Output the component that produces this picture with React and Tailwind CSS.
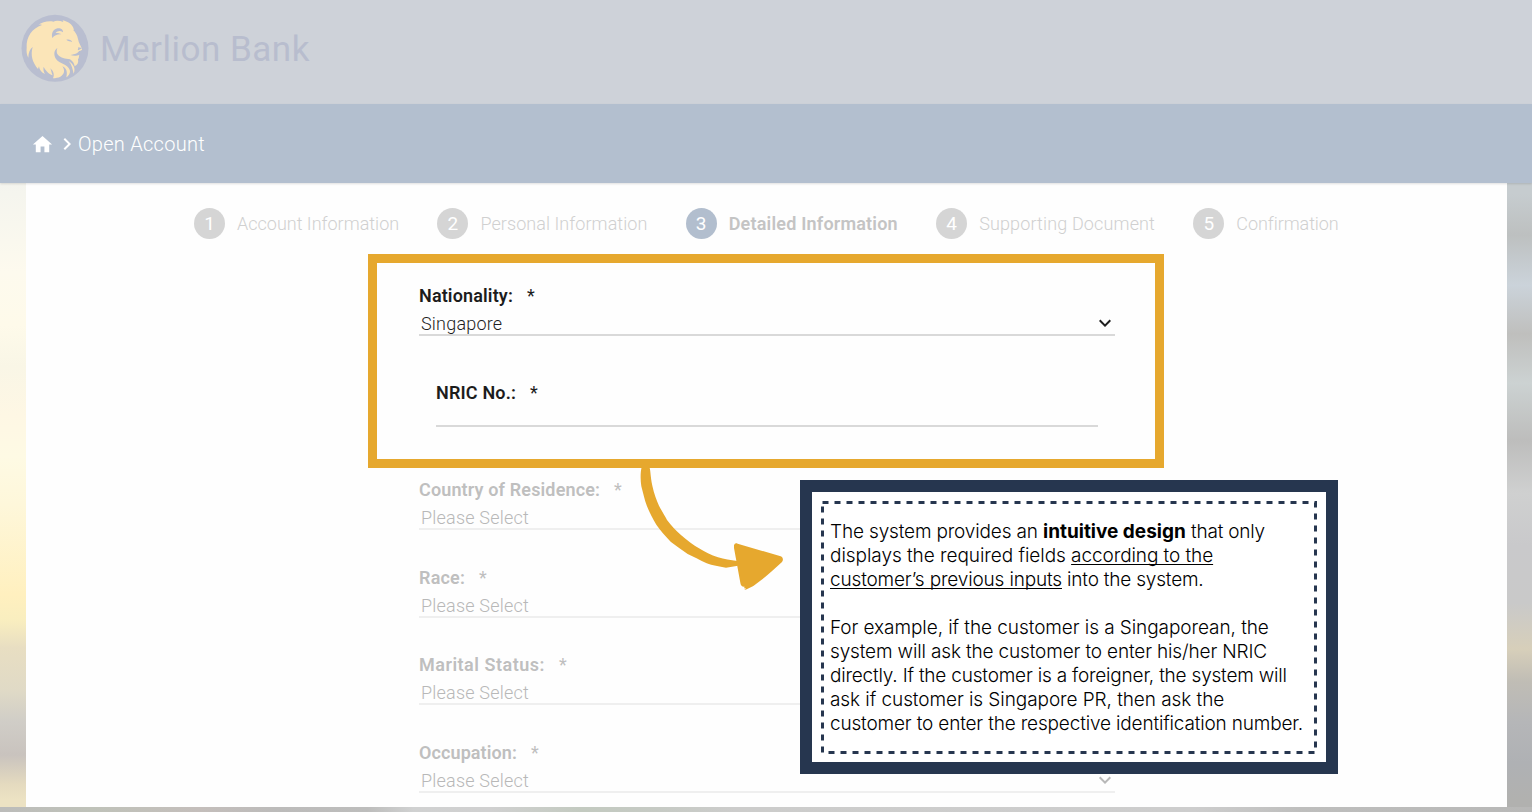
import React from 'react';
import { MdHome, MdChevronRight, MdKeyboardArrowDown } from 'react-icons/md';

function LionLogo() {
  return (
    <svg className="h-[85px] w-[90px] shrink-0" viewBox="0 0 270 255">
      <circle cx="135" cy="130" r="100.5" fill="#b9bed0" />
      <path
        fill="#fbe5b8"
        d="M50 128 C48 96 66 70 96 60 C91 58 88 58 84 60 C96 52 114 47 130 50 C139 45 150 47 160 51 L158 46 C173 50 188 57 192 75 L189 74 C197 82 202 90 204 102 C206 113 212 122 216 131 C217 135 213 137 207 138 C205 144 195 148 181 150 C190 153 201 153 208 149 C206 155 208 158 204 163 C206 173 203 180 194 184 C193 175 188 168 180 163 C166 162 151 158 145 151 C139 145 139 137 142 129 C131 136 131 151 138 162 C149 177 172 176 179 194 C182 204 177 211 169 217 C173 201 170 190 157 184 C166 197 163 208 151 215 C145 218 137 219 129 220 C134 210 131 199 121 190 C125 200 125 207 128 211 C116 207 105 195 101 185 C99 193 101 201 105 207 C93 203 88 192 87 184 L84 192 C67 171 61 151 68 126 C60 132 55 144 55 158 C50 149 49 139 50 128 Z"
      />
      <path
        fill="#b9bed0"
        d="M127 99 C123 86 129 73 143 70 C153 69 160 74 159 82 C151 76 143 77 137 84 C144 83 150 85 154 88 C143 87 134 90 127 99 Z"
      />
      <path fill="#b9bed0" d="M169 104 C178 102 184 105 187 111 C181 108 174 110 169 104 Z" />
      <path fill="#b9bed0" d="M204 127 L217 129 L205 136 C201 133 207 131 204 127 Z" />
      <path fill="#fbe5b8" d="M176 168 C190 177 198 190 191 206 C188 194 186 180 176 168 Z" />
    </svg>
  );
}

const steps = [
  { n: 1, label: 'Account Information', track: 'tracking-normal' },
  { n: 2, label: 'Personal Information', track: 'tracking-[0.06px]' },
  { n: 3, label: 'Detailed Information', track: 'tracking-[0.19px]', active: true },
  { n: 4, label: 'Supporting Document', track: 'tracking-[0.14px]' },
  { n: 5, label: 'Confirmation', track: 'tracking-[-0.07px]' },
];

function Step({ n, label, track, active }) {
  return (
    <li className="flex items-center gap-3">
      <span
        className={`flex size-[31px] items-center justify-center rounded-full text-[19px] leading-none text-white ${
          active ? 'bg-[#b2bece]' : 'bg-[#d5d5d5]'
        }`}
      >
        {n}
      </span>
      <span
        className={`whitespace-nowrap text-lg ${track} ${
          active ? 'font-semibold text-[#c4c4c4]' : 'font-light text-[#d0d0d0]'
        }`}
      >
        {label}
      </span>
    </li>
  );
}

function FieldLabel({ children, track, faded }) {
  return (
    <div
      className={`flex h-6 items-center gap-[15px] whitespace-nowrap text-lg font-semibold ${
        faded ? 'text-[#bfbfbf]' : 'text-[#1c1c1c]'
      }`}
    >
      <span className={track}>{children}</span>
      <span className="-ml-px font-normal">*</span>
    </div>
  );
}

function SelectField({ label, track, value, faded }) {
  return (
    <div className="h-[52px]">
      <FieldLabel track={track} faded={faded}>
        {label}
      </FieldLabel>
      <div
        className={`flex h-7 items-center justify-between border-b-2 pl-0.5 pt-1 text-lg tracking-[0.2px] ${
          faded ? 'border-[#efefef] font-light text-[#b8b8b8]' : 'border-[#d9d9d9] font-light text-[#1f1f1f]'
        }`}
      >
        <span className="pt-0.5">{value}</span>
        <MdKeyboardArrowDown className="-mr-0.5 size-6" />
      </div>
    </div>
  );
}

function Arrow() {
  return (
    <svg className="absolute left-[620px] top-[455px] h-[150px] w-[200px]" viewBox="0 0 600 450" fill="#e6a82e">
      <path d="M65 36 L88 36 C92 45 91 64 97 92 C102 115 110 137 117 152 C126 170 136 184 141 195 C154 212 166 225 182 239 C201 256 221 271 237 280 C253 290 274 301 294 307 C313 313 331 316 352 318 L354 332 L318 338 C297 335 277 331 260 325 C240 316 222 305 203 297 C184 283 168 272 152 260 C136 243 122 228 109 209 C98 190 88 171 81 154 C73 134 70 115 64 94 C61 75 61 51 65 36 Z" />
      <path d="M342 271 C344 265 347 263 353 266 L482 304 C489 307 491 314 486 321 C464 341 437 367 412 384 L400 393 L394 396 L380 403 L373 405 L378 400 L372 400 L374 395 C367 396 362 392 361 383 L342 279 Z" />
    </svg>
  );
}

function Callout() {
  return (
    <aside className="absolute left-[800px] top-[480px] h-[294px] w-[538px] border-[12px] border-[#26364f] bg-white">
      <svg className="absolute left-0 top-0 h-[270px] w-[514px]" viewBox="0 0 514 270">
        <rect x="10.5" y="10.5" width="493" height="250" fill="none" stroke="#26364f" strokeWidth="3" strokeDasharray="6 6" />
      </svg>
      <div className="relative whitespace-nowrap pl-[18px] pt-[28px] font-['Inter','Liberation_Sans',sans-serif] text-[19px] font-light leading-6 text-black">
        <p>
          <span className="tracking-[-0.16px]">The system provides an </span>
          <strong className="font-bold">intuitive design</strong>
          <span className="tracking-[-0.2px]"> that only</span>
          <br />
          <span className="tracking-[-0.05px]">displays the required fields </span>
          <span className="tracking-[-0.08px] underline decoration-1 underline-offset-2 [text-decoration-skip-ink:none]">according to the</span>
          <br />
          <span className="tracking-[-0.16px] underline decoration-1 underline-offset-2 [text-decoration-skip-ink:none]">customer’s previous inputs</span>
          <span className="tracking-[-0.2px]"> into the system.</span>
        </p>
        <p className="mt-6">
          <span className="tracking-[-0.07px]">For example, if the customer is a Singaporean, the</span>
          <br />
          <span className="tracking-[-0.15px]">system will ask the customer to enter his/her NRIC</span>
          <br />
          <span className="tracking-[-0.2px]">directly. If the customer is a foreigner, the system will</span>
          <br />
          <span className="tracking-[-0.07px]">ask if customer is Singapore PR, then ask the</span>
          <br />
          <span className="tracking-[-0.165px]">customer to enter the respective identification number.</span>
        </p>
      </div>
    </aside>
  );
}

export default function App() {
  return (
    <div className="relative flex h-[812px] w-[1532px] flex-col overflow-hidden bg-[#c8c8c6] font-['Roboto','Liberation_Sans',sans-serif]">
      <header className="flex h-[104px] shrink-0 items-start bg-[#ced2d9] pl-[10px] pt-[5px]">
        <LionLogo />
        <h1 className="pt-[20px] text-[35px] font-normal leading-[50px] tracking-[0.5px] text-[#b8bdce]">Merlion Bank</h1>
      </header>

      <nav className="z-10 flex h-[79px] shrink-0 items-center bg-[#b3bfcf] pl-[31px] text-white shadow-[0_1px_2px_rgba(0,0,0,0.12)]">
        <MdHome className="mt-0.5 size-[23px]" />
        <MdChevronRight className="ml-px mt-px size-6" />
        <span className="-ml-px text-[20px] font-light tracking-[0.28px]">Open Account</span>
      </nav>

      <div className="flex h-[624px] shrink-0">
        <div className="w-[26px] shrink-0 bg-[linear-gradient(to_bottom,#f4f4ee_0px,#f5f5ee_11px,#fdfaee_89px,#fefaea_142px,#f9f6e6_183px,#fef7e4_232px,#fefae4_273px,#fef7da_322px,#fff0bf_412px,#f9eebf_437px,#e8dec2_465px,#e0dac6_507px,#d0cdc7_539px,#c9c3be_572px,#e4dabf_601px,#ece2c3_617px)]" />

        <main className="flex-1 overflow-hidden bg-[#fefefe] pt-[25px]">
          <ol className="flex gap-[38.3px] pl-[168px]">
            {steps.map((s) => (
              <Step key={s.n} {...s} />
            ))}
          </ol>

          <form className="ml-[393px] mt-[45px] flex w-[696px] flex-col">
            <SelectField label="Nationality:" track="tracking-[0.14px]" value="Singapore" />
            <div className="mt-[45px] h-[46px] border-b-2 border-[#d9d9d9] mx-[17px]">
              <FieldLabel track="tracking-[0.17px]">NRIC No.:</FieldLabel>
            </div>
            <div className="mt-[51px] flex flex-col gap-[35.5px]">
              <SelectField label="Country of Residence:" track="tracking-[0.14px]" value="Please Select" faded />
              <SelectField label="Race:" track="tracking-[0.2px]" value="Please Select" faded />
              <SelectField label="Marital Status:" track="tracking-[0.5px]" value="Please Select" faded />
              <SelectField label="Occupation:" track="tracking-[0.1px]" value="Please Select" faded />
            </div>
          </form>
        </main>

        <div className="w-[25px] shrink-0 bg-[linear-gradient(to_bottom,#c6cccf_0px,#c6cccf_11px,#bdc0c0_52px,#cbd3da_102px,#bfbfbd_151px,#ccd2d2_200px,#bdbdbc_257px,#cfd0d0_310px,#c9c9cb_363px,#c9c9c9_420px,#d7cfba_466px,#c0bdb5_498px,#b5b6b8_539px,#afb1b4_580px,#b1b1af_617px)]" />
      </div>
      <div className="flex-1 bg-[linear-gradient(to_right,#bcbcba,#bfc2b9_6%,#c4bebb_13%,#bcbbba_18%,#bdbdbc_24%,#d0d1d1_27%,#d0d0d0_32%,#c3cac0_38%,#c6cac4_43%,#cccccb_48%,#cdcdcd_78%,#bebebd_85%,#b8b8b7)]" />

      <div className="absolute left-[368px] top-[254px] h-[214px] w-[796px] border-[9px] border-[#e6a82e]" />
      <Arrow />
      <Callout />
    </div>
  );
}
